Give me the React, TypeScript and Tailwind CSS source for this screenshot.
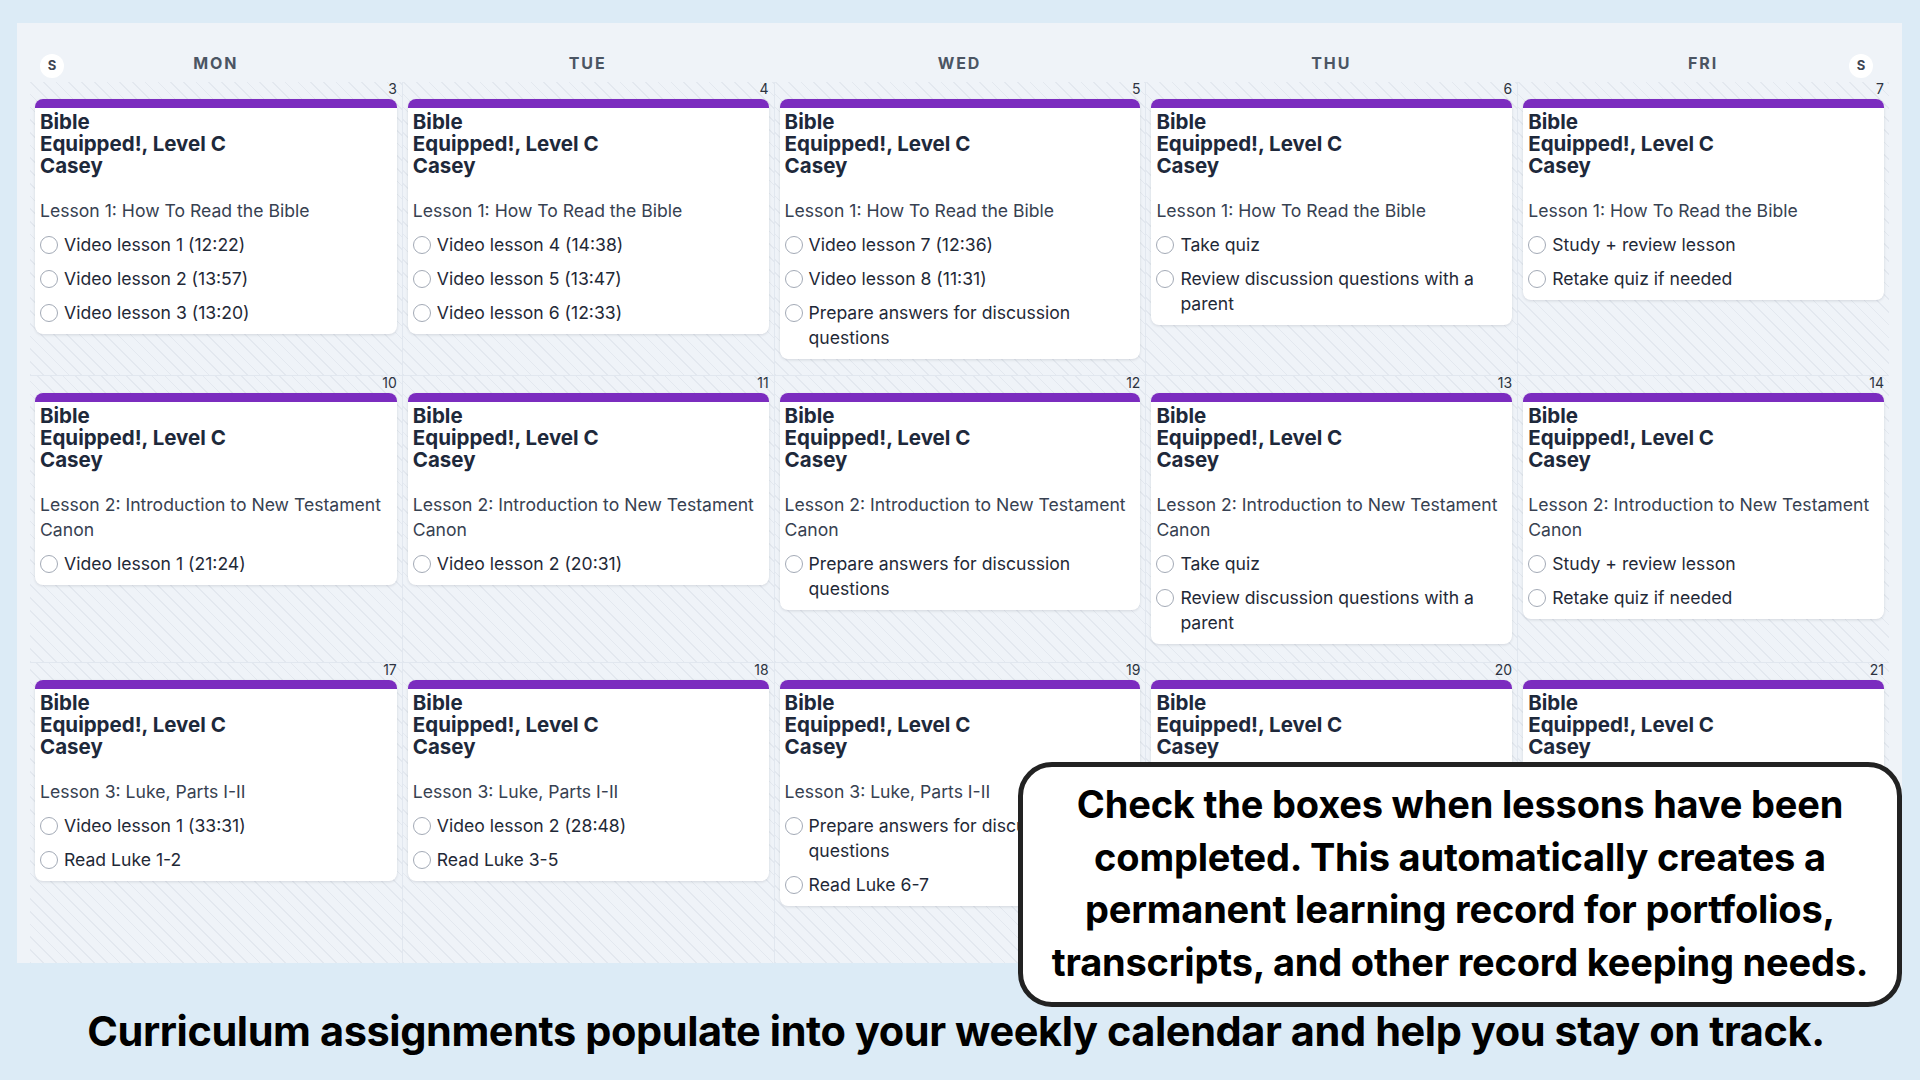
const days = ["MON", "TUE", "WED", "THU", "FRI"]

type Entry = { date: number; lesson: string; tasks: string[] }

const weeks: Entry[][] = [
  [
    { date: 3, lesson: "Lesson 1: How To Read the Bible", tasks: ["Video lesson 1 (12:22)", "Video lesson 2 (13:57)", "Video lesson 3 (13:20)"] },
    { date: 4, lesson: "Lesson 1: How To Read the Bible", tasks: ["Video lesson 4 (14:38)", "Video lesson 5 (13:47)", "Video lesson 6 (12:33)"] },
    { date: 5, lesson: "Lesson 1: How To Read the Bible", tasks: ["Video lesson 7 (12:36)", "Video lesson 8 (11:31)", "Prepare answers for discussion questions"] },
    { date: 6, lesson: "Lesson 1: How To Read the Bible", tasks: ["Take quiz", "Review discussion questions with a parent"] },
    { date: 7, lesson: "Lesson 1: How To Read the Bible", tasks: ["Study + review lesson", "Retake quiz if needed"] },
  ],
  [
    { date: 10, lesson: "Lesson 2: Introduction to New Testament Canon", tasks: ["Video lesson 1 (21:24)"] },
    { date: 11, lesson: "Lesson 2: Introduction to New Testament Canon", tasks: ["Video lesson 2 (20:31)"] },
    { date: 12, lesson: "Lesson 2: Introduction to New Testament Canon", tasks: ["Prepare answers for discussion questions"] },
    { date: 13, lesson: "Lesson 2: Introduction to New Testament Canon", tasks: ["Take quiz", "Review discussion questions with a parent"] },
    { date: 14, lesson: "Lesson 2: Introduction to New Testament Canon", tasks: ["Study + review lesson", "Retake quiz if needed"] },
  ],
  [
    { date: 17, lesson: "Lesson 3: Luke, Parts I-II", tasks: ["Video lesson 1 (33:31)", "Read Luke 1-2"] },
    { date: 18, lesson: "Lesson 3: Luke, Parts I-II", tasks: ["Video lesson 2 (28:48)", "Read Luke 3-5"] },
    { date: 19, lesson: "Lesson 3: Luke, Parts I-II", tasks: ["Prepare answers for discussion questions", "Read Luke 6-7"] },
    { date: 20, lesson: "Lesson 3: Luke, Parts I-II", tasks: ["Take quiz", "Review discussion questions with a parent"] },
    { date: 21, lesson: "Lesson 3: Luke, Parts I-II", tasks: ["Study + review lesson", "Retake quiz if needed"] },
  ],
]

const rowHeights = ["h-[293px]", "h-[287px]", "flex-1"]

function WeekendDot() {
  return (
    <div className="w-[24px] h-[24px] rounded-full bg-white flex items-center justify-center text-[13px] font-bold text-[#3f4654] mt-[6px]">
      S
    </div>
  )
}

function AssignmentCard({ entry }: { entry: Entry }) {
  return (
    <div className="mt-[2px] bg-white rounded-[8px] overflow-hidden shadow-[0_1px_3px_rgba(15,23,42,0.12)]">
      <div className="h-[9px] bg-[#7b2cbf]" />
      <div className="px-[5px] pt-[3px] pb-[9px]">
        <div className="text-[20.5px] leading-[22px] font-bold text-[#1e293b]">
          Bible
          <br />
          Equipped!, Level C
          <br />
          Casey
        </div>
        <div className="mt-[21px] text-[17.6px] leading-[25px] text-[#374151]">{entry.lesson}</div>
        <ul className="mt-[9px] flex flex-col gap-[9px]">
          {entry.tasks.map((task) => (
            <li key={task} className="flex items-start gap-[6px] text-[17.6px] leading-[25px] text-[#1f2937]">
              <span className="mt-[3.5px] w-[18px] h-[18px] shrink-0 rounded-full border-[1.5px] border-[#a3aab6] bg-white" />
              <span>{task}</span>
            </li>
          ))}
        </ul>
      </div>
    </div>
  )
}

export default function App() {
  return (
    <div className="w-[1920px] h-[1080px] bg-[#dcebf6] relative overflow-hidden font-['Inter',sans-serif]">
      <div className="pt-[23px] pl-[17px]">
        <div className="w-[1885px] h-[940px] bg-[#eff3f8] px-[13px] flex flex-col">
          {/* weekday header */}
          <div className="h-[59px] grid grid-cols-5 shrink-0">
            {days.map((d, i) => (
              <div key={d} className="grid grid-cols-[1fr_auto_1fr] items-center pt-[20px]">
                <div className="pl-[10px]">{i === 0 && <WeekendDot />}</div>
                <div className="text-[16px] font-bold tracking-[0.12em] text-[#4b5563]">{d}</div>
                <div className="flex justify-end pr-[16px]">{i === 4 && <WeekendDot />}</div>
              </div>
            ))}
          </div>

          {weeks.map((week, w) => (
            <div key={w} className={`${rowHeights[w]} grid grid-cols-5 ${w > 0 ? "border-t border-[#e1e7ef]" : ""}`}>
              {week.map((entry, i) => (
                <div
                  key={entry.date}
                  className={`px-[5px] bg-[repeating-linear-gradient(45deg,#e3e8ef_0px,#e3e8ef_1.2px,transparent_1.2px,transparent_9px)] ${i > 0 ? "border-l border-[#e1e7ef]" : ""}`}
                >
                  <div className="-mt-[1px] text-right text-[14px] leading-[16px] text-[#2d3340]">{entry.date}</div>
                  <AssignmentCard entry={entry} />
                </div>
              ))}
            </div>
          ))}
        </div>
      </div>

      <p className="mt-[44px] pr-[8px] text-center text-[41.5px] leading-[48px] font-bold text-black tracking-[-0.01em]">
        Curriculum assignments populate into your weekly calendar and help you stay on track.
      </p>

      {/* callout over the calendar */}
      <div className="absolute left-[1018px] top-[762px] w-[884px] h-[245px] bg-white border-[5px] border-[#222222] rounded-[34px] flex items-center justify-center">
        <p className="-mt-[3px] text-center text-[38px] leading-[52.5px] font-bold text-black tracking-[-0.005em]">
          Check the boxes when lessons have been
          <br />
          completed. This automatically creates a
          <br />
          permanent learning record for portfolios,
          <br />
          transcripts, and other record keeping needs.
        </p>
      </div>
    </div>
  )
}
